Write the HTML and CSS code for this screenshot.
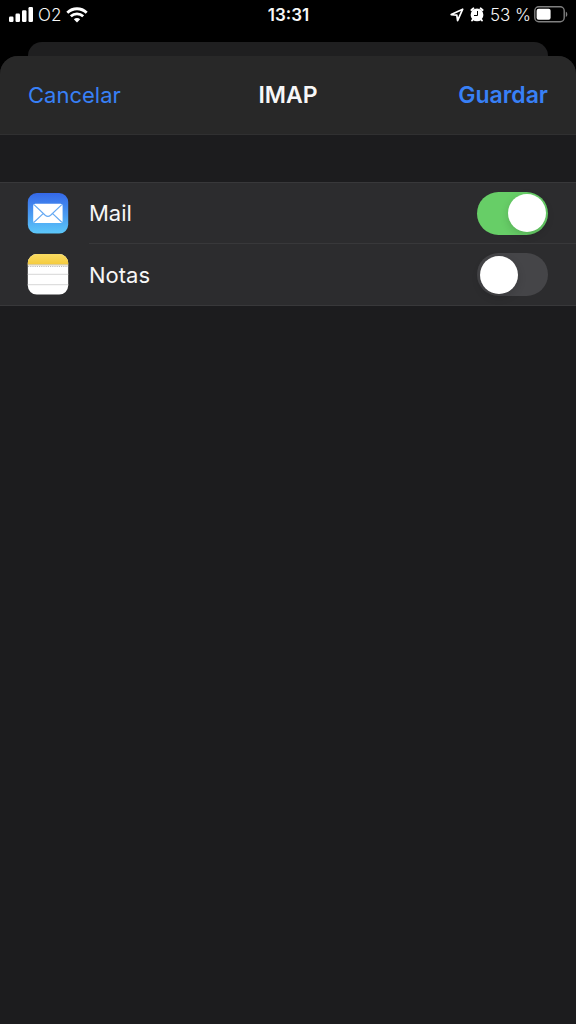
FILE: index.html
```html
<!DOCTYPE html>
<html lang="es">
<head>
<meta charset="utf-8">
<meta name="viewport" content="width=device-width, initial-scale=1">
<title>IMAP</title>
<link rel="stylesheet" href="styles.css">
</head>
<body>
<header class="status">
  <div class="status-left">
    <svg class="signal" width="24" height="15" viewBox="0 0 24 15" fill="#fff" aria-hidden="true">
      <rect x="0" y="9.5" width="4.5" height="5.5" rx="1.2"/>
      <rect x="6.5" y="6.5" width="4.5" height="8.5" rx="1.2"/>
      <rect x="13" y="3.3" width="4.5" height="11.7" rx="1.2"/>
      <rect x="19.5" y="0" width="4.5" height="15" rx="1.2"/>
    </svg>
    <span class="carrier">O2</span>
    <svg width="22" height="16" viewBox="0 0 22 16" fill="none" stroke="#fff" stroke-width="2.8" aria-hidden="true">
      <path d="M1.3 5.7C6.8.4 15.2.4 20.7 5.7"/>
      <path d="M4.8 9.3c3.5-3.3 8.9-3.3 12.4 0"/>
      <path d="M11 15.6l-3.2-3.3c1.8-1.7 4.6-1.7 6.4 0z" fill="#fff" stroke="none"/>
    </svg>
  </div>
  <time class="clock">13:31</time>
  <div class="status-right">
    <svg class="location" width="14" height="14" viewBox="0 0 14 14" fill="none" stroke="#fff" stroke-width="1.7" stroke-linejoin="round" aria-hidden="true">
      <path d="M12.7 1.2L1.2 6.6l5.6.6.8 5.4z"/>
    </svg>
    <svg class="alarm" width="14" height="15" viewBox="0 0 14 15" aria-hidden="true">
      <circle cx="7" cy="7.9" r="6.4" fill="#fff"/>
      <path d="M1.5 3L3.3 1.4M10.7 1.4L12.5 3M2.8 12.6l-.7.9M11.2 12.6l.7.9" fill="none" stroke="#fff" stroke-width="2" stroke-linecap="round"/>
      <path d="M7.5 4v4.5H4" fill="none" stroke="#000" stroke-width="1"/>
    </svg>
    <span class="percent">53 %</span>
    <svg class="battery" width="34" height="17" viewBox="0 0 34 17" aria-hidden="true">
      <rect x=".8" y=".8" width="29.4" height="15" rx="4" fill="none" stroke="#808080" stroke-width="1.4"/>
      <rect x="2.6" y="2.8" width="14" height="11" rx="2" fill="#fff"/>
      <path d="M31.8 5.7c2 .6 2 4.6 0 5.2z" fill="#808080"/>
    </svg>
  </div>
</header>
<div class="sheet-behind"></div>
<main class="sheet">
  <div class="nav">
    <button class="nav-button" type="button">Cancelar</button>
    <h1 class="title">IMAP</h1>
    <button class="nav-button nav-save" type="button">Guardar</button>
  </div>
  <div class="group">
    <label class="row">
      <svg class="app-icon" width="42" height="42" viewBox="0 0 42 42" aria-hidden="true">
        <defs>
          <linearGradient id="mail-bg" x1="0" y1="0" x2="0" y2="1"><stop offset="0" stop-color="#3568e8"/><stop offset="1" stop-color="#5cc8fa"/></linearGradient>
        </defs>
        <rect x=".8" y="0" width="40.4" height="40.6" rx="9" fill="url(#mail-bg)"/>
        <rect x="6.2" y="10.7" width="29.4" height="19.2" rx="2" fill="#fff"/>
        <path d="M7 11.6l11.2 10.6q2.7 2.4 5.4 0L34.8 11.6M7 29.2l9.4-8.8M34.8 29.2l-9.4-8.8" fill="none" stroke="#65a9f3" stroke-width="1.2"/>
      </svg>
      <span class="cell"><span class="name">Mail</span><input class="switch" type="checkbox" role="switch" checked></span>
    </label>
    <label class="row">
      <svg class="app-icon" width="42" height="42" viewBox="0 0 42 42" aria-hidden="true">
        <defs>
          <linearGradient id="notes-bg" x1="0" y1="0" x2="0" y2="1"><stop offset="0" stop-color="#fadc62"/><stop offset="1" stop-color="#f5cb3e"/></linearGradient>
          <clipPath id="notes-clip"><rect x=".8" y="0" width="40.4" height="40.6" rx="9"/></clipPath>
        </defs>
        <g clip-path="url(#notes-clip)">
          <path fill="#fff" d="M0 0h42v42H0z"/>
          <path fill="url(#notes-bg)" d="M0 0h42v10.4H0z"/>
          <path stroke="#c9bd98" stroke-width="1" d="M0 10.9h42"/>
          <path stroke="#bdbdbd" stroke-width="1.2" stroke-dasharray="1.2 1" d="M1 12.5h41"/>
          <path stroke="#dedede" stroke-width="1.2" d="M0 20.4h42M0 30.6h42"/>
        </g>
      </svg>
      <span class="cell"><span class="name">Notas</span><input class="switch" type="checkbox" role="switch"></span>
    </label>
  </div>
</main>
</body>
</html>
```
FILE: styles.css
```css
* {
  box-sizing: border-box;
}

body {
  display: flex;
  flex-direction: column;
  min-height: 100vh;
  margin: 0;
  background: #000;
  color: #f7f7f7;
  font-family: Inter, "Liberation Sans", sans-serif;
}

.status {
  display: grid;
  grid-template-columns: 1fr auto 1fr;
  align-items: center;
  height: 42px;
  padding: 1px 8px 14px 9px;
  font-size: 17px;
  line-height: 20px;
}

.status-left,
.status-right {
  display: flex;
  align-items: center;
  gap: 5px;
}

.status-right {
  justify-content: flex-end;
  gap: 6px;
}

.battery {
  margin-left: -3px;
}

.carrier,
.percent {
  font-weight: 300;
}

.clock {
  font-weight: 600;
}

.sheet-behind {
  height: 28px;
  margin: 0 28px -14px;
  border-radius: 14px 14px 0 0;
  background: #1f1f20;
}

.sheet {
  flex: 1;
  overflow: hidden;
  border-radius: 18px 18px 0 0;
  background: #1c1c1e;
}

.nav {
  display: grid;
  grid-template-columns: 1fr auto 1fr;
  align-items: center;
  height: 79px;
  padding: 0 28px;
  border-bottom: 1px solid #303031;
  background: #282828;
}

.title {
  margin: 0;
  font-size: 23px;
  font-weight: 600;
  line-height: 28px;
}

.nav-button {
  justify-self: start;
  padding: 0;
  border: 0;
  background: none;
  color: #3880f6;
  font: 400 22px/28px Inter, "Liberation Sans", sans-serif;
}

.nav-save {
  justify-self: end;
  font-size: 23px;
  font-weight: 600;
}

.group {
  margin-top: 47px;
  border: solid #38383a;
  border-width: 1px 0;
  background: #2c2c2e;
}

.row {
  display: flex;
  align-items: center;
  gap: 20px;
  padding-left: 27px;
}

.cell {
  display: flex;
  flex: 1;
  align-items: center;
  justify-content: space-between;
  height: 61px;
  padding-right: 28px;
  border-bottom: 1px solid #38383a;
}

.row:last-child .cell {
  border-bottom: 0;
}

.name {
  font-size: 22px;
  line-height: 28px;
}

.switch {
  display: flex;
  align-items: center;
  width: 71px;
  height: 43px;
  margin: 0;
  padding: 0 2px 0 3px;
  border-radius: 22px;
  background: #454548;
  appearance: none;
}

.switch::before {
  width: 38px;
  height: 38px;
  border-radius: 50%;
  background: #fff;
  box-shadow: 0 3px 8px rgb(0 0 0 / 15%);
  content: "";
}

.switch:checked {
  justify-content: flex-end;
  background: #67ce67;
}
```
